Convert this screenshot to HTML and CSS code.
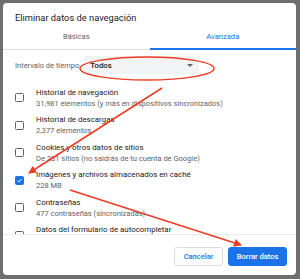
FILE: index.html
```html
<!DOCTYPE html>
<html lang="es">
<head>
  <meta charset="UTF-8" />
  <title>Eliminar datos de navegación</title>
  <link rel="stylesheet" href="styles.css">
</head>
<body>
  <div class="dialog">
    <div class="title">Eliminar datos de navegación</div>

    <div class="tabs">
      <div class="tab">Básicas</div>
      <div class="tab active">Avanzada</div>
    </div>

    <div class="range">
      <span class="range-label">Intervalo de tiempo</span>
      <div class="select">
        <span>Todos</span>
        <span class="caret"></span>
      </div>
    </div>

    <div class="list">
      <div class="item">
        <span class="box"></span>
        <div class="text">
          <div class="name">Historial de navegación</div>
          <div class="sub">31,981 elementos (y más en dispositivos sincronizados)</div>
        </div>
      </div>
      <div class="item">
        <span class="box"></span>
        <div class="text">
          <div class="name">Historial de descargas</div>
          <div class="sub">2,377 elementos</div>
        </div>
      </div>
      <div class="item">
        <span class="box"></span>
        <div class="text">
          <div class="name">Cookies y otros datos de sitios</div>
          <div class="sub">De 231 sitios (no saldrás de tu cuenta de Google)</div>
        </div>
      </div>
      <div class="item">
        <span class="box checked">
          <svg viewBox="0 0 10 10" width="9" height="9"><path d="M2.2 5.2 L4.2 7.1 L7.9 3" fill="none" stroke="#fff" stroke-width="1.4"/></svg>
        </span>
        <div class="text">
          <div class="name">Imágenes y archivos almacenados en caché</div>
          <div class="sub">228 MB</div>
        </div>
      </div>
      <div class="item">
        <span class="box"></span>
        <div class="text">
          <div class="name">Contraseñas</div>
          <div class="sub">477 contraseñas (sincronizadas)</div>
        </div>
      </div>
      <div class="item">
        <span class="box"></span>
        <div class="text">
          <div class="name">Datos del formulario de autocompletar</div>
          <div class="sub">&nbsp;</div>
        </div>
      </div>
    </div>

    <div class="footer">
      <button class="btn">Cancelar</button>
      <button class="btn primary">Borrar datos</button>
    </div>
  </div>

  <!-- marcas rojas encima del diálogo -->
  <svg class="marks" width="300" height="279" viewBox="0 0 300 279">
    <defs>
      <marker id="head" markerWidth="8" markerHeight="8" refX="7" refY="4" orient="auto" markerUnits="userSpaceOnUse">
        <path d="M0 0 L8 4 L0 8 Z" fill="#ee3b24"/>
      </marker>
    </defs>
    <ellipse cx="147" cy="68.5" rx="67" ry="11.5" fill="none" stroke="#ee3b24" stroke-width="1.5"/>
    <line x1="162" y1="88" x2="29" y2="173" stroke="#ee3b24" stroke-width="1.5" marker-end="url(#head)"/>
    <line x1="70" y1="190" x2="241" y2="245" stroke="#ee3b24" stroke-width="1.5" marker-end="url(#head)"/>
  </svg>
</body>
</html>
```

FILE: styles.css
```css
body {
  margin: 0;
  width: 300px;
  height: 279px;
  background: #6f6f6f;
  font-family: Roboto, 'Liberation Sans', sans-serif;
  padding: 3px 4px 4px 3px;
  box-sizing: border-box;
  overflow: hidden;
}

.dialog {
  background: #fff;
  border-radius: 4px;
  height: 272px;
  display: flex;
  flex-direction: column;
  overflow: hidden;
}

.title {
  padding: 9px 12px 0;
  font-size: 9.3px;
  line-height: 11px;
  color: #202124;
}

.tabs {
  display: flex;
  margin-top: 3px;
  border-bottom: 1px solid #dadce0;
}

.tab {
  flex: 1;
  text-align: center;
  font-size: 7.6px;
  line-height: 22px;
  color: #5f6368;
  border-bottom: 2px solid transparent;
  margin-bottom: -1px;
}

.tab.active {
  color: #1a73e8;
  border-bottom-color: #1a73e8;
}

.range {
  display: flex;
  align-items: center;
  gap: 5px;
  padding: 6px 12px 10px;
}

.range-label {
  font-size: 7.5px;
  color: #5f6368;
}

.select {
  width: 115px;
  height: 18px;
  background: #f1f3f4;
  border-radius: 3px;
  display: flex;
  align-items: center;
  justify-content: space-between;
  padding: 0 6px;
  box-sizing: border-box;
  font-size: 7.8px;
  font-weight: 500;
  color: #202124;
}

.caret {
  width: 0;
  height: 0;
  border-left: 3.5px solid transparent;
  border-right: 3.5px solid transparent;
  border-top: 3.5px solid #5f6368;
}

.list {
  height: 150px;
  overflow: hidden;
  border-bottom: 1px solid #e8eaed;
}

.item {
  display: flex;
  align-items: center;
  height: 27.5px;
  padding-left: 12px;
}

.box {
  width: 9px;
  height: 9px;
  border: 1.5px solid #5f6368;
  border-radius: 1.5px;
  box-sizing: border-box;
  margin-right: 12px;
  display: flex;
  align-items: center;
  justify-content: center;
}

.box.checked {
  background: #1a73e8;
  border-color: #1a73e8;
}

.name, .sub {
  line-height: 11px;
  white-space: nowrap;
}

.name {
  font-size: 7.9px;
  color: #202124;
}

.sub {
  font-size: 7.5px;
  color: #5f6368;
}

.footer {
  display: flex;
  justify-content: flex-end;
  gap: 5px;
  padding: 12px 9px 0;
}

.btn {
  height: 19px;
  font-family: inherit;
  font-size: 7.5px;
  font-weight: 500;
  border-radius: 3px;
  border: 1px solid #dadce0;
  background: #fff;
  color: #1a73e8;
  width: 49px;
  padding: 0;
}

.btn.primary {
  background: #1a73e8;
  border-color: #1a73e8;
  color: #fff;
  width: 59px;
}

.marks {
  position: absolute;
  left: 0;
  top: 0;
  pointer-events: none;
}
```
